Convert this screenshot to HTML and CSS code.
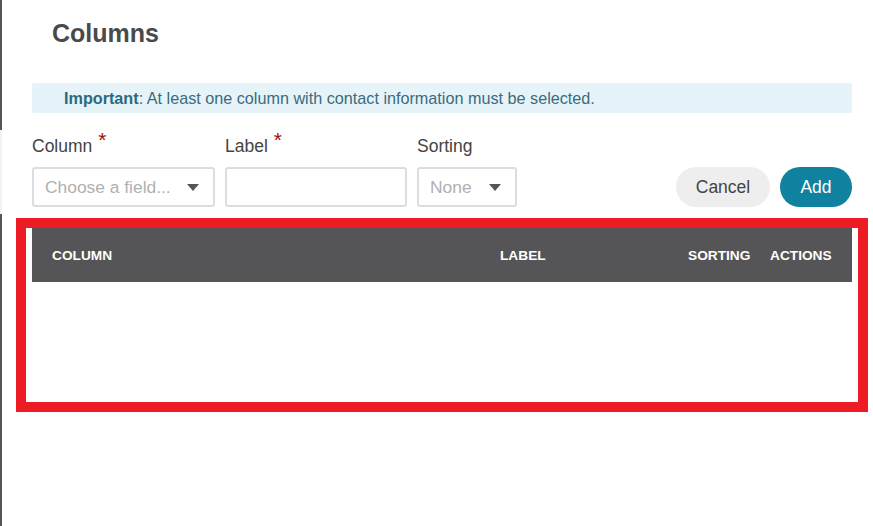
FILE: index.html
```html
<!DOCTYPE html>
<html>
<head>
<meta charset="utf-8">
<link rel="stylesheet" href="styles.css">
</head>
<body>
<div class="page">
  <h1 class="title">Columns</h1>
  <div class="notice"><strong>Important</strong>: At least one column with contact information must be selected.</div>
  <div class="form-row">
    <div class="field field-column">
      <label class="field-label">Column<span class="req">*</span></label>
      <div class="select"><span class="placeholder">Choose a field...</span><span class="caret"></span></div>
    </div>
    <div class="field field-label-input">
      <label class="field-label">Label<span class="req">*</span></label>
      <div class="input"></div>
    </div>
    <div class="field field-sorting">
      <label class="field-label">Sorting</label>
      <div class="select"><span class="placeholder">None</span><span class="caret"></span></div>
    </div>
    <div class="actions">
      <button class="btn btn-cancel">Cancel</button>
      <button class="btn btn-add">Add</button>
    </div>
  </div>
  <div class="highlight">
    <div class="table-head">
      <div class="th">COLUMN</div>
      <div class="th">LABEL</div>
      <div class="th">SORTING</div>
      <div class="th">ACTIONS</div>
    </div>
    <div class="table-body"></div>
  </div>
</div>
</body>
</html>
```

FILE: styles.css
```css
html, body {
  margin: 0;
  padding: 0;
  background: #fff;
}
body {
  font-family: "Liberation Sans", Arial, sans-serif;
  color: #444;
}
.page {
  border-left: 2px solid #555;
  min-height: 526px;
  box-sizing: border-box;
  padding: 19px 21px 0 30px;
  display: flex;
  flex-direction: column;
}
.title {
  margin: 0 0 0 20px;
  font-size: 25px;
  line-height: 29px;
  font-weight: bold;
  color: #4a4a4a;
}
.notice {
  margin-top: 35px;
  height: 30px;
  line-height: 30px;
  background: #e6f4f9;
  border-radius: 2px;
  padding-left: 32px;
  font-size: 16.2px;
  color: #3a6b7e;
  white-space: nowrap;
}
.notice strong {
  color: #2a6a80;
}
.form-row {
  margin: 17px 0 0 -32px;
  border-left: 2px solid #f2f2f2;
  padding: 7px 0 7px 30px;
  display: flex;
  align-items: flex-end;
  gap: 10px;
}
.field {
  display: flex;
  flex-direction: column;
  gap: 12px;
}
.field-label {
  display: block;
  height: 18px;
  font-size: 17.5px;
  line-height: 18px;
  color: #444;
  white-space: nowrap;
}
.req {
  color: #a0100c;
  font-size: 21px;
  line-height: 0;
  margin-left: 6px;
  vertical-align: 5px;
}
.select, .input {
  box-sizing: border-box;
  height: 40px;
  border: 2px solid #ddd;
  border-radius: 3px;
  display: flex;
  align-items: center;
  justify-content: space-between;
  padding: 0 14px 0 11px;
}
.field-column .select { width: 183px; }
.field-label-input .input { width: 182px; }
.field-sorting .select { width: 100px; }
.placeholder {
  font-size: 17.4px;
  color: #b0b0b0;
  white-space: nowrap;
}
.caret {
  width: 0;
  height: 0;
  border-left: 6px solid transparent;
  border-right: 6px solid transparent;
  border-top: 7px solid #555;
}
.actions {
  margin-left: auto;
  display: flex;
  gap: 10px;
}
.btn {
  height: 40px;
  border: none;
  border-radius: 20px;
  font-family: "Liberation Sans", Arial, sans-serif;
  font-size: 17.5px;
  padding: 0;
}
.btn-cancel {
  width: 94px;
  background: #eeeeee;
  color: #444;
}
.btn-add {
  width: 72px;
  background: #10819f;
  color: #fff;
}
.highlight {
  margin: 4px -16px 0 -16px;
  border: 10px solid #ed1c24;
  padding: 0 6px;
  height: 194px;
  box-sizing: border-box;
}
.table-head {
  height: 54px;
  background: #555557;
  display: grid;
  grid-template-columns: 448px 188px 82px 1fr;
  align-items: center;
  padding-left: 20px;
}
.th {
  color: #fff;
  font-size: 13.7px;
  font-weight: bold;
}
```
